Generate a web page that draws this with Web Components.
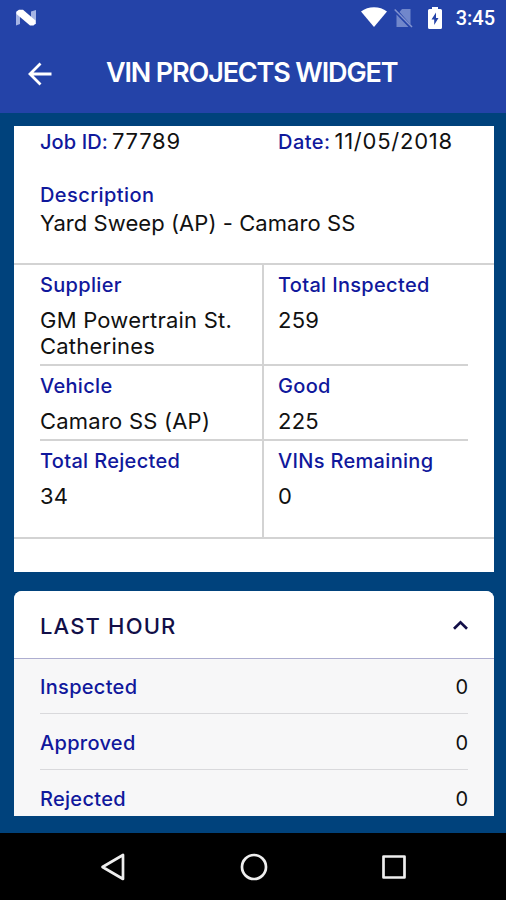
<!DOCTYPE html>
<html lang="en">
<head>
<meta charset="utf-8">
<title>VIN Projects Widget</title>
<style>
body {
  margin: 0;
  font-family: Inter, "Liberation Sans", sans-serif;
  background: #00427c;
}
</style>
</head>
<body>
<vin-app>
  <status-bar slot="top" time="3:45"></status-bar>
  <title-bar slot="top">VIN PROJECTS WIDGET</title-bar>

  <project-card>
    <inline-field slot="job" label="Job ID:" style="--label-spacing: 0.1px">77789</inline-field>
    <inline-field slot="date" label="Date:" style="--label-spacing: .45px">11/05/2018</inline-field>
    <span slot="description">Yard Sweep (AP) - Camaro SS</span>
    <info-cell label="Supplier">GM Powertrain St. Catherines</info-cell>
    <info-cell label="Total Inspected">259</info-cell>
    <info-cell label="Vehicle">Camaro SS (AP)</info-cell>
    <info-cell label="Good">225</info-cell>
    <info-cell label="Total Rejected">34</info-cell>
    <info-cell label="VINs Remaining">0</info-cell>
  </project-card>

  <summary-card heading="LAST HOUR">
    <summary-row label="Inspected">0</summary-row>
    <summary-row label="Approved">0</summary-row>
    <summary-row label="Rejected">0</summary-row>
  </summary-card>

  <nav-bar slot="bottom"></nav-bar>
</vin-app>

<script>
function define(name, html) {
  let template = document.createElement('template');
  template.innerHTML = html;

  window.customElements.define(name, class extends HTMLElement {
    connectedCallback() {
      if (this.shadowRoot) return;
      this.attachShadow({mode: "open"});
      this.shadowRoot.appendChild(template.content.cloneNode(true));
      // copy attributes into the elements that ask for them
      this.shadowRoot.querySelectorAll("[data-text]").forEach(el => {
        el.textContent = this.getAttribute(el.dataset.text);
      });
    }
  });
}

define('vin-app', `
    <style>
    :host {
      display: flex;
      flex-direction: column;
      height: 900px;
      overflow: hidden;
    }
    header {
      flex: none;
      height: 113px;
      background: #2443a8;
    }
    main {
      flex: none;
      display: flex;
      flex-direction: column;
      gap: 19px;
      box-sizing: border-box;
      height: 690px;
      margin: 13px 12px 17px 14px;
      overflow: hidden;
    }
    </style>
    <header><slot name="top"></slot></header>
    <main><slot></slot></main>
    <slot name="bottom"></slot>
`);

define('status-bar', `
    <style>
    :host {
      display: flex;
      align-items: center;
      box-sizing: border-box;
      height: 35px;
      padding: 0 11px 0 15px;
      color: #fff;
    }
    .space { flex: 1; }
    svg { display: block; }
    .wifi { margin: 0 7px 2px 0; }
    .sim { margin-right: 15px; }
    .battery { margin-right: 14px; }
    .time {
      font: 500 20px/24px Roboto, sans-serif;
      padding-top: 1px;
    }
    </style>
    <svg width="22" height="18" viewBox="0 0 22 18">
      <path d="M1 3l4-2v14l-4 1.500zM16 2.500l5-1.500v14l-5 1z" fill="#a5b4e4"/>
      <path d="M1.500 2.500L4 .8h4L20.500 11.500v3L18.500 16.500h-3.500L1.500 5z" fill="#fff"/>
    </svg>
    <div class="space"></div>
    <svg class="wifi" width="26" height="20" viewBox="0 0 26 20">
      <path d="M0 4.500C7-1.200 19-1.200 26 4.500L13 20z" fill="#fff"/>
    </svg>
    <svg class="sim" width="19" height="20" viewBox="0 0 19 20">
      <path d="M8 1h8.500v15.500L5.500 4zM2.500 6.500L14.500 19h-12z" fill="#7187cb"/>
      <path d="M.7 1.500L18 19" stroke="#8394d0" stroke-width="1.500"/>
    </svg>
    <svg class="battery" width="14" height="22" viewBox="0 0 14 22">
      <path d="M4 0h6v2h2.500q1.500 0 1.500 1.500v17q0 1.500-1.500 1.500h-11Q0 22 0 20.500v-17Q0 2 1.500 2H4z" fill="#fff"/>
      <path d="M8 5.500L3.500 12.500h2.700V18L10.500 11H8z" fill="#2443a8"/>
    </svg>
    <div class="time" data-text="time"></div>
`);

define('title-bar', `
    <style>
    :host {
      display: flex;
      align-items: center;
      height: 76px;
      padding-left: 28px;
      color: #fff;
    }
    svg { margin: 2px 54px 0 0; }
    h1 {
      margin: 0;
      font-size: 27px;
      font-weight: 600;
      line-height: 32px;
      letter-spacing: -1.15px;
      white-space: nowrap;
    }
    </style>
    <svg width="24" height="24" viewBox="0 0 24 24" fill="none" stroke="#fff" stroke-width="2.800">
      <path d="M23.500 12H2.500M12.500 1.500L2 12 12.500 22.500"/>
    </svg>
    <h1><slot></slot></h1>
`);

define('inline-field', `
    <style>
    :host {
      display: flex;
      align-items: baseline;
      gap: 4px;
      line-height: 28px;
      white-space: nowrap;
    }
    .label {
      color: #10189c;
      font-size: 20px;
      font-weight: 500;
      letter-spacing: var(--label-spacing);
    }
    .value {
      color: #111;
      font-size: 22px;
      letter-spacing: .75px;
    }
    </style>
    <span class="label" data-text="label"></span>
    <span class="value"><slot></slot></span>
`);

define('info-cell', `
    <style>
    :host {
      display: block;
      box-sizing: border-box;
    }
    .label {
      color: #10189c;
      font-size: 20px;
      font-weight: 500;
      line-height: 26px;
      letter-spacing: .32px;
    }
    .value {
      margin-top: 9px;
      color: #111;
      font-size: 22px;
      line-height: 26px;
      letter-spacing: .22px;
    }
    </style>
    <div class="label" data-text="label"></div>
    <div class="value"><slot></slot></div>
`);

define('project-card', `
    <style>
    :host {
      display: block;
      flex: none;
      box-sizing: border-box;
      height: 446px;
      background: #fff;
    }
    .summary {
      box-sizing: border-box;
      height: 139px;
      padding: 1px 26px 0 26px;
      border-bottom: 2px solid #d3d3d3;
    }
    .ids {
      display: grid;
      grid-template-columns: 238px 1fr;
    }
    .label {
      margin-top: 26px;
      color: #10189c;
      font-size: 20px;
      font-weight: 500;
      line-height: 26px;
      letter-spacing: .42px;
    }
    .description {
      color: #111;
      font-size: 22px;
      line-height: 30px;
      letter-spacing: .06px;
    }
    .grid {
      display: grid;
      grid-template-columns: 224px 1fr;
      grid-template-rows: 101px 75px 96px;
      padding: 0 26px 0 26px;
      border-bottom: 2px solid #d3d3d3;
    }
    ::slotted(info-cell) {
      border-bottom: 2px solid #d3d3d3;
      padding: 7px 0 0;
    }
    ::slotted(info-cell:nth-of-type(odd)) {
      border-right: 2px solid #d3d3d3;
    }
    ::slotted(info-cell:nth-of-type(even)) {
      padding-left: 14px;
    }
    ::slotted(info-cell:nth-of-type(n+5)) {
      border-bottom: 0;
    }
    </style>
    <div class="summary">
      <div class="ids"><slot name="job"></slot><slot name="date"></slot></div>
      <div class="label">Description</div>
      <div class="description"><slot name="description"></slot></div>
    </div>
    <div class="grid"><slot></slot></div>
`);

define('summary-card', `
    <style>
    :host {
      display: block;
      flex: none;
      border-radius: 8px;
      overflow: hidden;
      background: #f7f7f8;
    }
    .head {
      display: flex;
      align-items: center;
      justify-content: space-between;
      box-sizing: border-box;
      height: 68px;
      padding: 2px 26px 0 26px;
      background: #fff;
      border-bottom: 1px solid #aeaed0;
    }
    h2 {
      margin: 0;
      color: #120f48;
      font-size: 22px;
      font-weight: 500;
      line-height: 28px;
      letter-spacing: 1.15px;
    }
    .rows { padding: 0 26px 0 26px; }
    </style>
    <div class="head">
      <h2 data-text="heading"></h2>
      <svg width="15" height="12" viewBox="0 0 15 12" fill="none" stroke="#120f48" stroke-width="2.700">
        <path d="M1 8.800L7.500 2.300 14 8.800"/>
      </svg>
    </div>
    <div class="rows"><slot></slot></div>
`);

define('summary-row', `
    <style>
    :host {
      display: flex;
      justify-content: space-between;
      align-items: center;
      box-sizing: border-box;
      height: 56px;
      padding-top: 2px;
      border-bottom: 1px solid #d9d9dc;
      font-size: 20px;
      line-height: 26px;
    }
    :host(:first-child) { height: 55px; }
    .label {
      color: #10189c;
      font-weight: 500;
      letter-spacing: .3px;
    }
    .value { color: #111; }
    </style>
    <span class="label" data-text="label"></span>
    <span class="value"><slot></slot></span>
`);

define('nav-bar', `
    <style>
    :host {
      display: flex;
      flex: none;
      align-items: center;
      justify-content: center;
      gap: 112px;
      height: 67px;
      padding-left: 2px;
      background: #000;
    }
    svg { display: block; }
    </style>
    <svg width="28" height="28" viewBox="0 0 28 28" fill="none" stroke="#eee" stroke-width="2.700" stroke-linejoin="round">
      <path d="M2.500 14L23 2v24z"/>
    </svg>
    <svg width="28" height="28" viewBox="0 0 28 28" fill="none" stroke="#eee" stroke-width="2.700">
      <circle cx="14" cy="14" r="12"/>
    </svg>
    <svg width="28" height="28" viewBox="0 0 28 28" fill="none" stroke="#eee" stroke-width="2.700" stroke-linejoin="round">
      <rect x="3.500" y="3.500" width="21" height="21"/>
    </svg>
`);
</script>
</body>
</html>
